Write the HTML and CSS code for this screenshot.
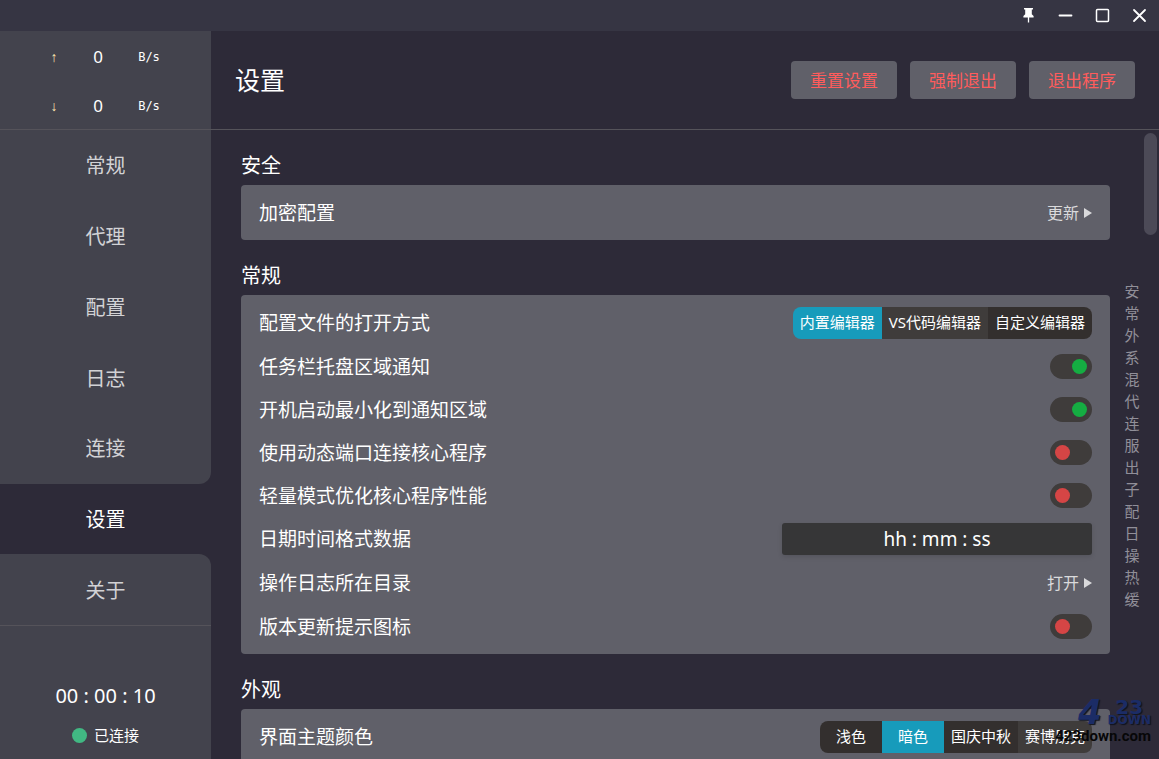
FILE: index.html
```html
<!DOCTYPE html>
<html lang="zh-CN">
<head>
<meta charset="utf-8">
<meta name="viewport" content="width=device-width, initial-scale=1">
<title>设置</title>
<link rel="stylesheet" href="styles.css">
</head>
<body>
<div class="window">
  <header class="titlebar">
    <button class="win-btn" aria-label="pin"><svg width="17" height="17" viewBox="0 0 17 17"><path d="M4 1h9v1.6h-1.2v4.6L13.6 9v1.4H3.4V9l1.8-1.8V2.6H4z" fill="#fff"/><path d="M8.5 10v5.5" stroke="#fff" stroke-width="1.3"/></svg></button>
    <button class="win-btn" aria-label="minimize"><svg width="17" height="17" viewBox="0 0 17 17"><path d="M2.5 8.5h12" stroke="#fff" stroke-width="1.8" stroke-linecap="round"/></svg></button>
    <button class="win-btn" aria-label="maximize"><svg width="17" height="17" viewBox="0 0 17 17"><rect x="2.5" y="2.5" width="12" height="12" rx="1" fill="none" stroke="#fff" stroke-width="1.5"/></svg></button>
    <button class="win-btn" aria-label="close"><svg width="17" height="17" viewBox="0 0 17 17"><path d="M3 3l11 11M14 3L3 14" stroke="#fff" stroke-width="1.8" stroke-linecap="round"/></svg></button>
  </header>
  <div class="body">
    <aside class="sidebar">
      <div class="speed">
        <div class="speed-row"><span class="arrow">↑</span><span class="amount">0</span><span class="unit">B/s</span></div>
        <div class="speed-row"><span class="arrow">↓</span><span class="amount">0</span><span class="unit">B/s</span></div>
      </div>
      <nav class="nav">
        <a class="nav-item" href="#">常规</a>
        <a class="nav-item" href="#">代理</a>
        <a class="nav-item" href="#">配置</a>
        <a class="nav-item" href="#">日志</a>
        <a class="nav-item before-active" href="#">连接</a>
        <a class="nav-item active" href="#" aria-current="page">设置</a>
        <a class="nav-item after-active" href="#">关于</a>
      </nav>
      <div class="status">
        <div class="timer">00 : 00 : 10</div>
        <div class="connected"><span class="dot"></span><span>已连接</span></div>
      </div>
    </aside>
    <main class="main">
      <div class="page-head">
        <h1 class="page-title">设置</h1>
        <div class="actions">
          <button class="action">重置设置</button>
          <button class="action">强制退出</button>
          <button class="action">退出程序</button>
        </div>
      </div>
      <div class="scroller">
        <div class="content">
          <h2 class="section-title" id="s1">安全</h2>
          <section class="panel">
            <div class="row"><span>加密配置</span><button class="more">更新<span class="caret"></span></button></div>
          </section>
          <h2 class="section-title" id="s2">常规</h2>
          <section class="panel">
            <div class="row"><span>配置文件的打开方式</span>
              <div class="segments">
                <label class="segment"><input type="radio" name="editor" checked><span>内置编辑器</span></label>
                <label class="segment light"><input type="radio" name="editor"><span>VS代码编辑器</span></label>
                <label class="segment"><input type="radio" name="editor"><span>自定义编辑器</span></label>
              </div>
            </div>
            <div class="row"><label for="tray">任务栏托盘区域通知</label><input class="toggle" id="tray" type="checkbox" checked></div>
            <div class="row"><label for="boot">开机启动最小化到通知区域</label><input class="toggle" id="boot" type="checkbox" checked></div>
            <div class="row"><label for="port">使用动态端口连接核心程序</label><input class="toggle" id="port" type="checkbox"></div>
            <div class="row"><label for="lite">轻量模式优化核心程序性能</label><input class="toggle" id="lite" type="checkbox"></div>
            <div class="row"><label for="fmt">日期时间格式数据</label><input class="field" id="fmt" type="text" value="hh : mm : ss"></div>
            <div class="row tall"><span>操作日志所在目录</span><button class="more">打开<span class="caret"></span></button></div>
            <div class="row"><label for="ver">版本更新提示图标</label><input class="toggle" id="ver" type="checkbox"></div>
          </section>
          <h2 class="section-title" id="s3">外观</h2>
          <section class="panel">
            <div class="row"><span>界面主题颜色</span>
              <div class="segments">
                <label class="segment"><input type="radio" name="theme"><span>浅色</span></label>
                <label class="segment"><input type="radio" name="theme" checked><span>暗色</span></label>
                <label class="segment"><input type="radio" name="theme"><span>国庆中秋</span></label>
                <label class="segment light"><input type="radio" name="theme"><span>赛博朋克</span></label>
              </div>
            </div>
          </section>
        </div>
        <nav class="index">
          <a href="#s1">安</a><a href="#s2">常</a><a href="#s3">外</a><a href="#">系</a><a href="#">混</a><a href="#">代</a><a href="#">连</a><a href="#">服</a><a href="#">出</a><a href="#">子</a><a href="#">配</a><a href="#">日</a><a href="#">操</a><a href="#">热</a><a href="#">缓</a>
        </nav>
        <div class="track"><div class="thumb"></div></div>
      </div>
    </main>
  </div>
  <div class="watermark">
    <div class="mark-top"><span class="mark-four">4</span><span class="mark-side"><span class="mark-23">23</span><span class="mark-down">DOWN</span></span></div>
    <div class="mark-url">423down.com</div>
  </div>
</div>
</body>
</html>
```
FILE: styles.css
```css
* { box-sizing: border-box; }
body {
  margin: 0;
  background: #2d2a38;
  color: #fff;
  font-family: "Noto Sans", "Noto Sans CJK SC", sans-serif;
}
button, input { font-family: inherit; border: 0; margin: 0; color: inherit; }
button { cursor: pointer; }
a { color: inherit; text-decoration: none; }
h1, h2 { margin: 0; font-weight: 400; }

.window { position: relative; display: flex; flex-direction: column; height: 100vh; overflow: hidden; }
.titlebar { display: flex; justify-content: flex-end; height: 31px; padding-right: 1px; background: #363543; flex: none; }
.win-btn { display: flex; align-items: center; justify-content: center; width: 37px; padding: 0; background: none; }
.body { display: flex; flex: 1; min-height: 0; }

.sidebar { display: flex; flex-direction: column; width: 211px; flex: none; }
.speed { background: #43434d; border-bottom: 1px solid #55535a; }
.speed-row { display: grid; grid-template-columns: 44px 44px 58px; justify-items: center; align-items: center; height: 49px; padding: 2px 0 0 32px; }
.unit { font-family: "DejaVu Sans Mono", monospace; font-size: 12px; }
.arrow { color: #ffeab0; font-family: "Liberation Sans", sans-serif; font-size: 14px; font-weight: 700; line-height: 16px; }
.amount { font-size: 17px; line-height: 24px; }
.nav { display: flex; flex-direction: column; flex: 1; }
.nav-item { display: flex; flex: 1; align-items: center; justify-content: center; padding-top: 2px; background: #43434d; color: #d2d2d5; font-size: 20px; line-height: 28px; }
.before-active { border-bottom-right-radius: 12px; }
.active { background: none; color: #fff; }
.after-active { border-top-right-radius: 12px; }
.status { padding: 56px 0 11px; background: #43434d; border-top: 1px solid #55535a; text-align: center; }
.timer { font-size: 20px; line-height: 28px; }
.connected { display: flex; align-items: center; justify-content: center; gap: 7px; margin-top: 14px; font-size: 15px; line-height: 22px; padding-bottom: 2px; }
.dot { width: 15px; height: 15px; border-radius: 50%; background: #41b883; }

.main { display: flex; flex-direction: column; flex: 1; min-width: 0; }
.page-head { display: flex; align-items: center; justify-content: space-between; height: 99px; padding: 0 24px; border-bottom: 1px solid #55535a; flex: none; }
.page-title { font-size: 25px; line-height: 36px; font-weight: 400; }
.actions { display: flex; gap: 13px; }
.action { min-width: 106px; height: 38px; padding: 0 6px 2px; border-radius: 4px; background: #606069; color: #ff5c5c; font-size: 17px; }
.scroller { display: flex; flex: 1; min-height: 0; overflow: hidden; }
.content { flex: 1; min-width: 0; padding-left: 30px; }
.section-title { padding: 21px 0 4px; font-size: 20px; line-height: 30px; }
.panel { display: flex; flex-direction: column; gap: 12px; padding: 12px 18px; border-radius: 4px; background: #606069; }
.row { display: flex; align-items: center; justify-content: space-between; min-height: 31px; font-size: 19px; line-height: 28px; }
.tall { min-height: 32px; }
.more { display: flex; align-items: center; gap: 5px; padding: 0; background: none; color: #dadadc; font-size: 16px; line-height: 24px; }
.caret { border: 5px solid transparent; border-left: 8px solid #dadadc; border-right: 0; }

.segments { display: flex; border-radius: 8px; overflow: hidden; }
.segment { position: relative; font-size: 15px; line-height: 30px; background: #332f2e; }
.segment.light { background: #3f3c3b; }
.segment input { position: absolute; opacity: 0; }
.segment span { display: block; min-width: 62px; padding: 0 7px 2px; text-align: center; }
.segment input:checked + span { background: #179bbb; }

.toggle { appearance: none; display: flex; align-items: center; width: 42px; height: 25px; padding: 0 5px; border-radius: 13px; background: #3f3c3b; }
.toggle::before { content: ""; width: 15px; height: 15px; border-radius: 50%; background: #d54545; }
.toggle:checked { justify-content: flex-end; }
.toggle:checked::before { background: #15ad42; }
.field { width: 310px; height: 32px; border-radius: 3px; background: #363637; box-shadow: 0 2px 5px rgba(0, 0, 0, .12); font-size: 19px; text-align: center; }

.index { display: flex; flex-direction: column; align-items: center; justify-content: center; width: 24px; margin-left: 10px; color: #918f99; font-size: 15px; line-height: 22px; }
.track { width: 15px; padding-top: 3px; }
.thumb { width: 13px; height: 102px; border-radius: 7px; background: #4c4a57; }

.watermark { position: absolute; right: 8px; bottom: 13px; width: 98px; color: #070708; pointer-events: none; }
.mark-top { display: flex; justify-content: flex-end; gap: 6px; color: #1b2c66; font-family: "DejaVu Sans", sans-serif; font-weight: 700; text-shadow: 1px 1px 1px #10131f; }
.mark-four { font-size: 34px; line-height: 24px; font-style: italic; }
.mark-side { display: flex; flex-direction: column; align-items: center; }
.mark-23 { font-size: 20px; line-height: 14px; }
.mark-down { font-size: 12px; line-height: 12px; }
.mark-url { font-family: Roboto, "Liberation Sans", sans-serif; font-size: 15px; line-height: 20px; font-weight: 700; text-align: right; }
```
